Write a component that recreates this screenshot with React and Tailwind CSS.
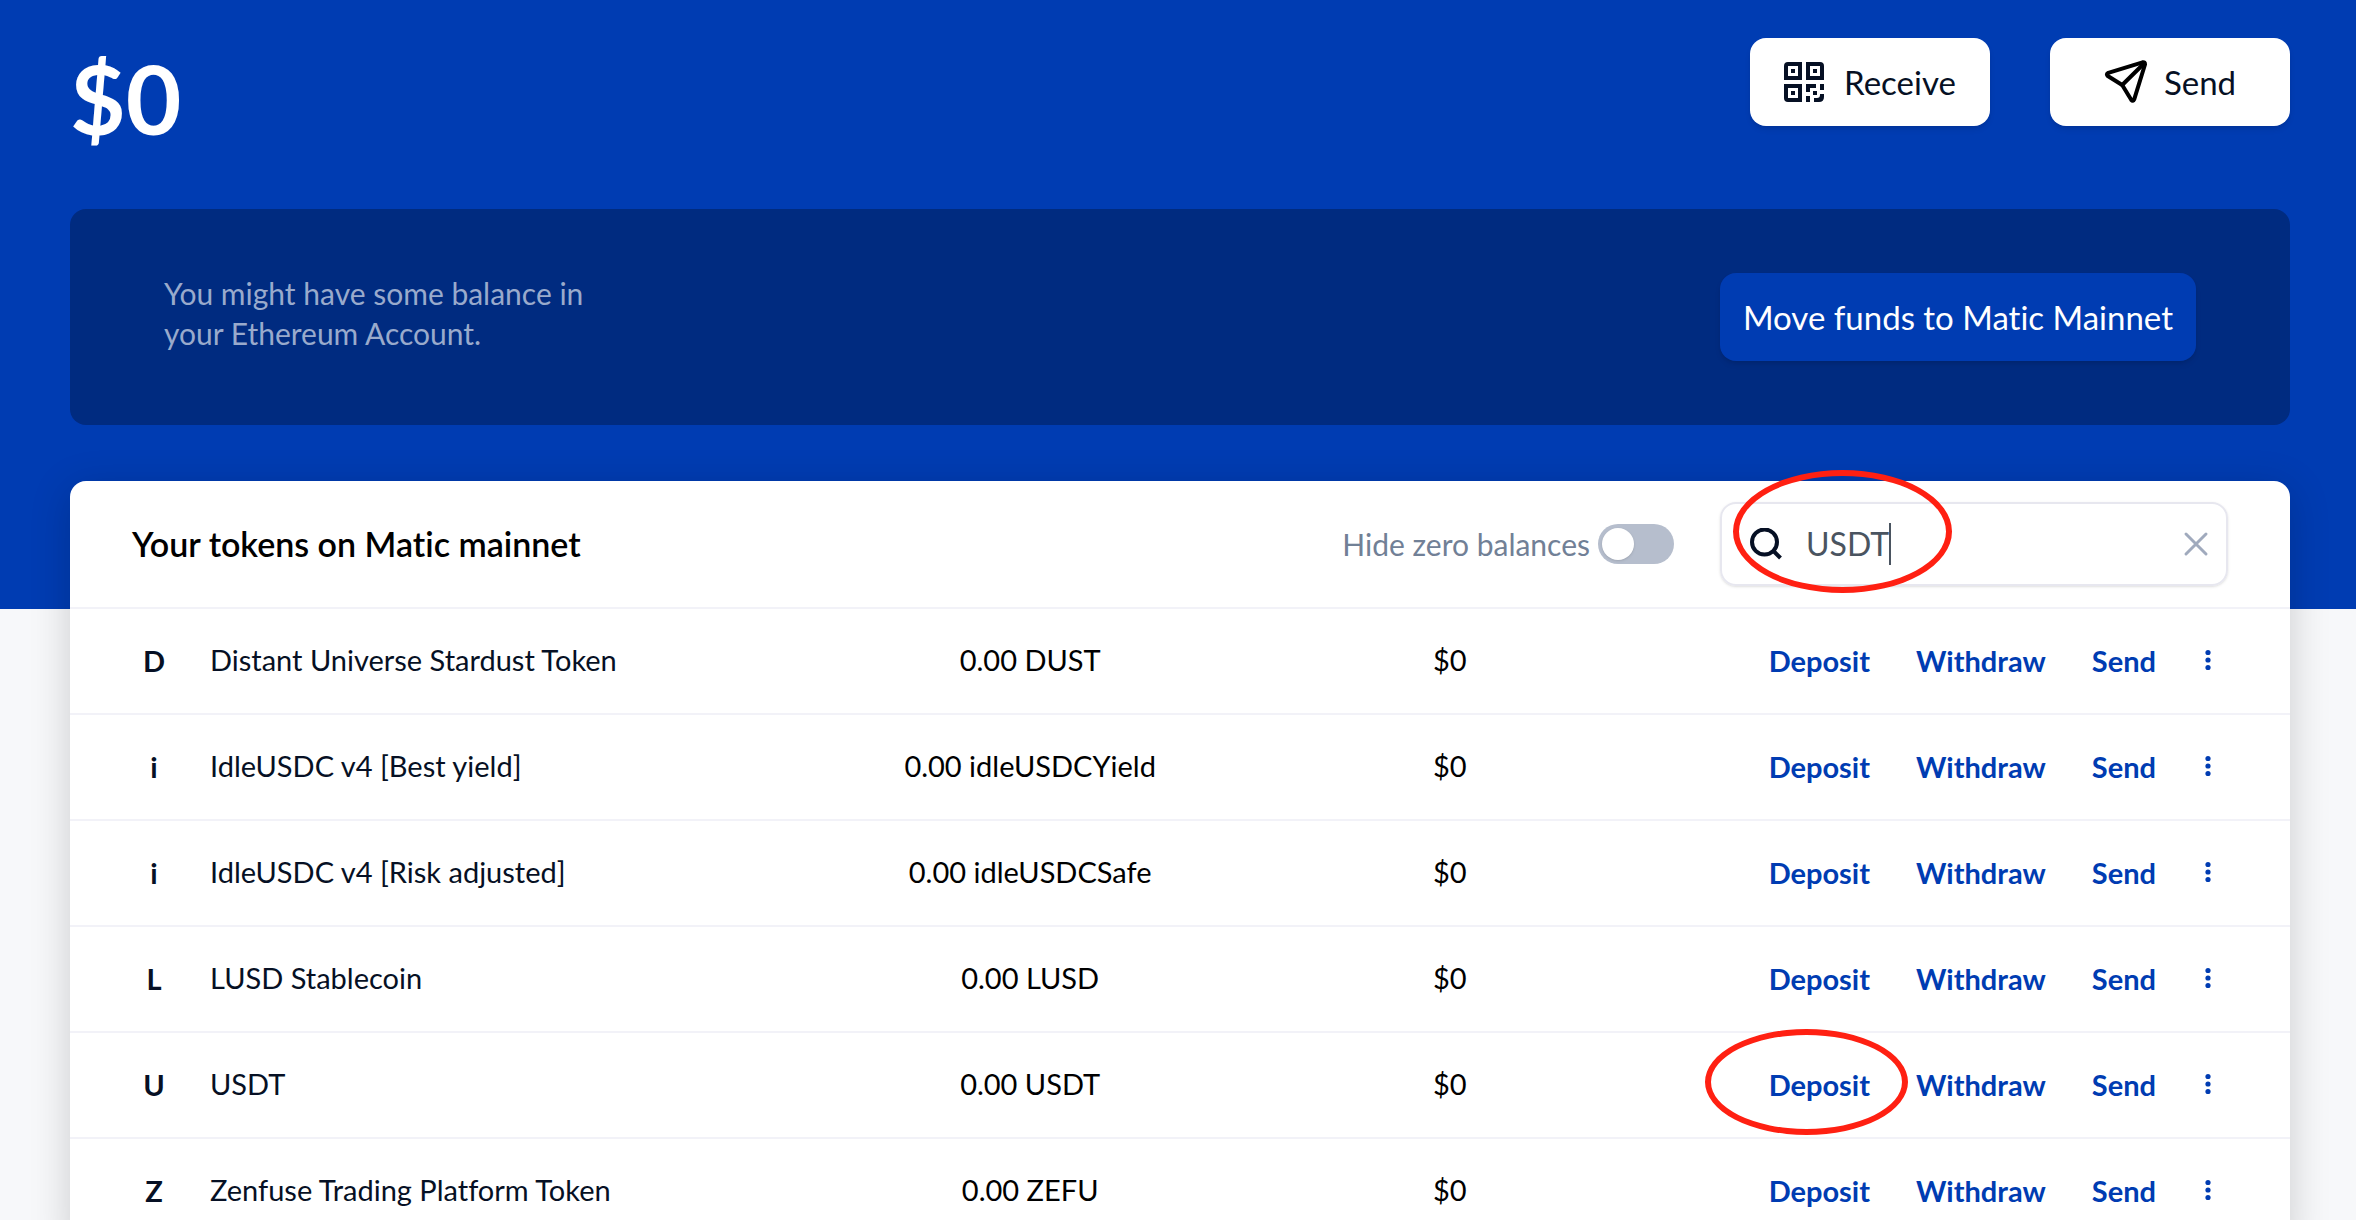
const TOKENS = [
  { letter: "D", name: "Distant Universe Stardust Token", amount: "0.00 DUST" },
  { letter: "i", name: "IdleUSDC v4 [Best yield]", amount: "0.00 idleUSDCYield" },
  { letter: "i", name: "IdleUSDC v4 [Risk adjusted]", amount: "0.00 idleUSDCSafe" },
  { letter: "L", name: "LUSD Stablecoin", amount: "0.00 LUSD" },
  { letter: "U", name: "USDT", amount: "0.00 USDT", marked: true },
  { letter: "Z", name: "Zenfuse Trading Platform Token", amount: "0.00 ZEFU" },
];

function QrIcon() {
  return (
    <svg className="size-10" viewBox="0 0 40 40" fill="#061024" aria-hidden="true">
      <path
        fillRule="evenodd"
        d="M4 0H18V18H0V4Q0 0 4 0ZM4 4V14H14V4ZM22 0H36Q40 0 40 4V18H22ZM26 4V14H36V4ZM0 22H18V40H4Q0 40 0 36ZM4 26V36H14V26Z"
      />
      <path d="M7 7h4v4H7zM29 7h4v4h-4zM7 29h4v4H7z" />
      <path d="M22 22h10v4h-6v4h-4zM29 29h4v4h-4zM36 22h4v6h-4zM22 34h4v6h-4zM36 32h4v3q0 5-5 5h-5v-4h3q3 0 3-3z" />
    </svg>
  );
}

function PlaneIcon() {
  return (
    <svg
      className="size-11"
      viewBox="0 0 44 44"
      fill="none"
      stroke="#000"
      strokeWidth="4"
      strokeLinecap="round"
      strokeLinejoin="round"
      aria-hidden="true"
    >
      <path d="M38.500 2.300L4.300 12.800Q1.800 14 3.800 16L18.200 25L27.200 39.800Q29 41.800 30.200 39.300L41 4.500Q41.200 1.700 38.500 2.300Z" />
      <path d="M18.200 25L40 3.500" />
    </svg>
  );
}

function SearchIcon() {
  return (
    <svg className="size-8 shrink-0" viewBox="0 0 32 32" fill="none" stroke="#061024" strokeWidth="4" aria-hidden="true">
      <circle cx="14.500" cy="14" r="12.500" />
      <path d="M23 22.500L30.500 30" />
    </svg>
  );
}

function Marker({ className }) {
  return (
    <span
      className={`pointer-events-none absolute rounded-[50%] border-6 border-[#ff2012] ${className}`}
      aria-hidden="true"
    />
  );
}

function TokenRow({ token }) {
  return (
    <tr className="h-[106px] *:border-b-2 *:border-[#f2f2f8]">
      <td>
        <div className="flex items-center pl-16">
          <span className="w-10 text-center font-bold">{token.letter}</span>
          <span className="pb-0.5 pl-9">{token.name}</span>
        </div>
      </td>
      <td className="pb-0.5 text-center text-black">{token.amount}</td>
      <td className="pb-0.5 text-center text-black">$0</td>
      <td>
        <div className="flex items-center justify-end gap-[46px] pr-[76px] font-bold text-[#003cb2]">
          <button type="button" className="relative">
            Deposit
            {token.marked && <Marker className="-left-16 -top-9 h-[106px] w-[203px]" />}
          </button>
          <button type="button">Withdraw</button>
          <button type="button">Send</button>
          <button type="button" aria-label={`More actions for ${token.name}`}>
            <svg className="h-6 w-3" viewBox="0 0 12 24" fill="#003cb2" aria-hidden="true">
              <circle cx="6" cy="3.500" r="2.600" />
              <circle cx="6" cy="11" r="2.600" />
              <circle cx="6" cy="18.500" r="2.600" />
            </svg>
          </button>
        </div>
      </td>
    </tr>
  );
}

export default function App() {
  return (
    <main className="h-screen overflow-hidden bg-[#f7f8fa] font-['Lato',sans-serif] text-[29px] leading-10 text-[#061024] [font-variant-ligatures:none]">
      <section className="bg-[#003cb2] pb-[184px] pl-[70px] pr-[66px] pt-[38px]">
        <div className="flex items-start justify-between">
          <h1 className="pt-1 text-[96px] font-bold leading-[112px] text-white">$0</h1>
          <div className="flex gap-[60px] text-[33px]">
            <button
              type="button"
              className="flex h-[88px] w-60 items-center justify-center gap-5 rounded-2xl bg-white shadow-md"
            >
              <QrIcon />
              Receive
            </button>
            <button
              type="button"
              className="flex h-[88px] w-60 items-center justify-center gap-4 rounded-2xl bg-white shadow-md"
            >
              <PlaneIcon />
              Send
            </button>
          </div>
        </div>
        <div className="mt-[55px] flex h-54 items-center justify-between rounded-2xl bg-[#002b80] px-[94px]">
          <p className="w-[440px] pb-2 text-[30px] text-[#99aacc]">
            You might have some balance in your Ethereum Account.
          </p>
          <button type="button" className="h-[88px] rounded-2xl bg-[#003cb2] px-[23px] text-[33px] text-white shadow-md">
            Move funds to Matic Mainnet
          </button>
        </div>
      </section>

      <section className="relative -mt-32 ml-[70px] mr-[66px] rounded-t-2xl bg-white shadow-[0_8px_40px_rgba(0,0,0,0.18)]">
        <header className="flex h-32 items-center border-b-2 border-[#f2f2f8] pl-[62px] pr-[62px]">
          <h2 className="flex-1 text-[34px] font-semibold text-black">Your tokens on Matic mainnet</h2>
          <label className="flex items-center gap-2 text-[30px] text-[#718096]">
            Hide zero balances
            <input
              type="checkbox"
              role="switch"
              className="flex h-10 w-[76px] appearance-none items-center rounded-full bg-[#b6becd] px-1 before:size-8 before:rounded-full before:bg-white before:shadow-sm checked:justify-end"
            />
          </label>
          <div className="relative ml-[46px]">
            <div className="flex h-[84px] w-[508px] items-center rounded-2xl border-2 border-[#e7e7ef] pl-7 pr-3 shadow-sm">
              <SearchIcon />
              <input
                type="text"
                aria-label="Search tokens"
                defaultValue="USDT"
                className="field-sizing-content ml-6 text-[32px] text-[#4a5460] outline-none"
              />
              <span className="h-[42px] w-[2px] bg-[#4a5460]" aria-hidden="true" />
              <button type="button" aria-label="Clear search" className="ml-auto">
                <svg className="size-9" viewBox="0 0 36 36" fill="none" stroke="#a0aabd" strokeWidth="3" strokeLinecap="round" aria-hidden="true">
                  <path d="M8 8L28 28M28 8L8 28" />
                </svg>
              </button>
            </div>
            <Marker className="-top-8 left-[13px] h-[123px] w-[219px]" />
          </div>
        </header>
        <table className="w-full table-fixed border-separate border-spacing-0">
          <colgroup>
            <col className="w-[33.8%]" />
            <col className="w-[18.9%]" />
            <col className="w-[18.9%]" />
            <col />
          </colgroup>
          <tbody>
            {TOKENS.map((token) => (
              <TokenRow key={token.name} token={token} />
            ))}
          </tbody>
        </table>
      </section>
    </main>
  );
}
